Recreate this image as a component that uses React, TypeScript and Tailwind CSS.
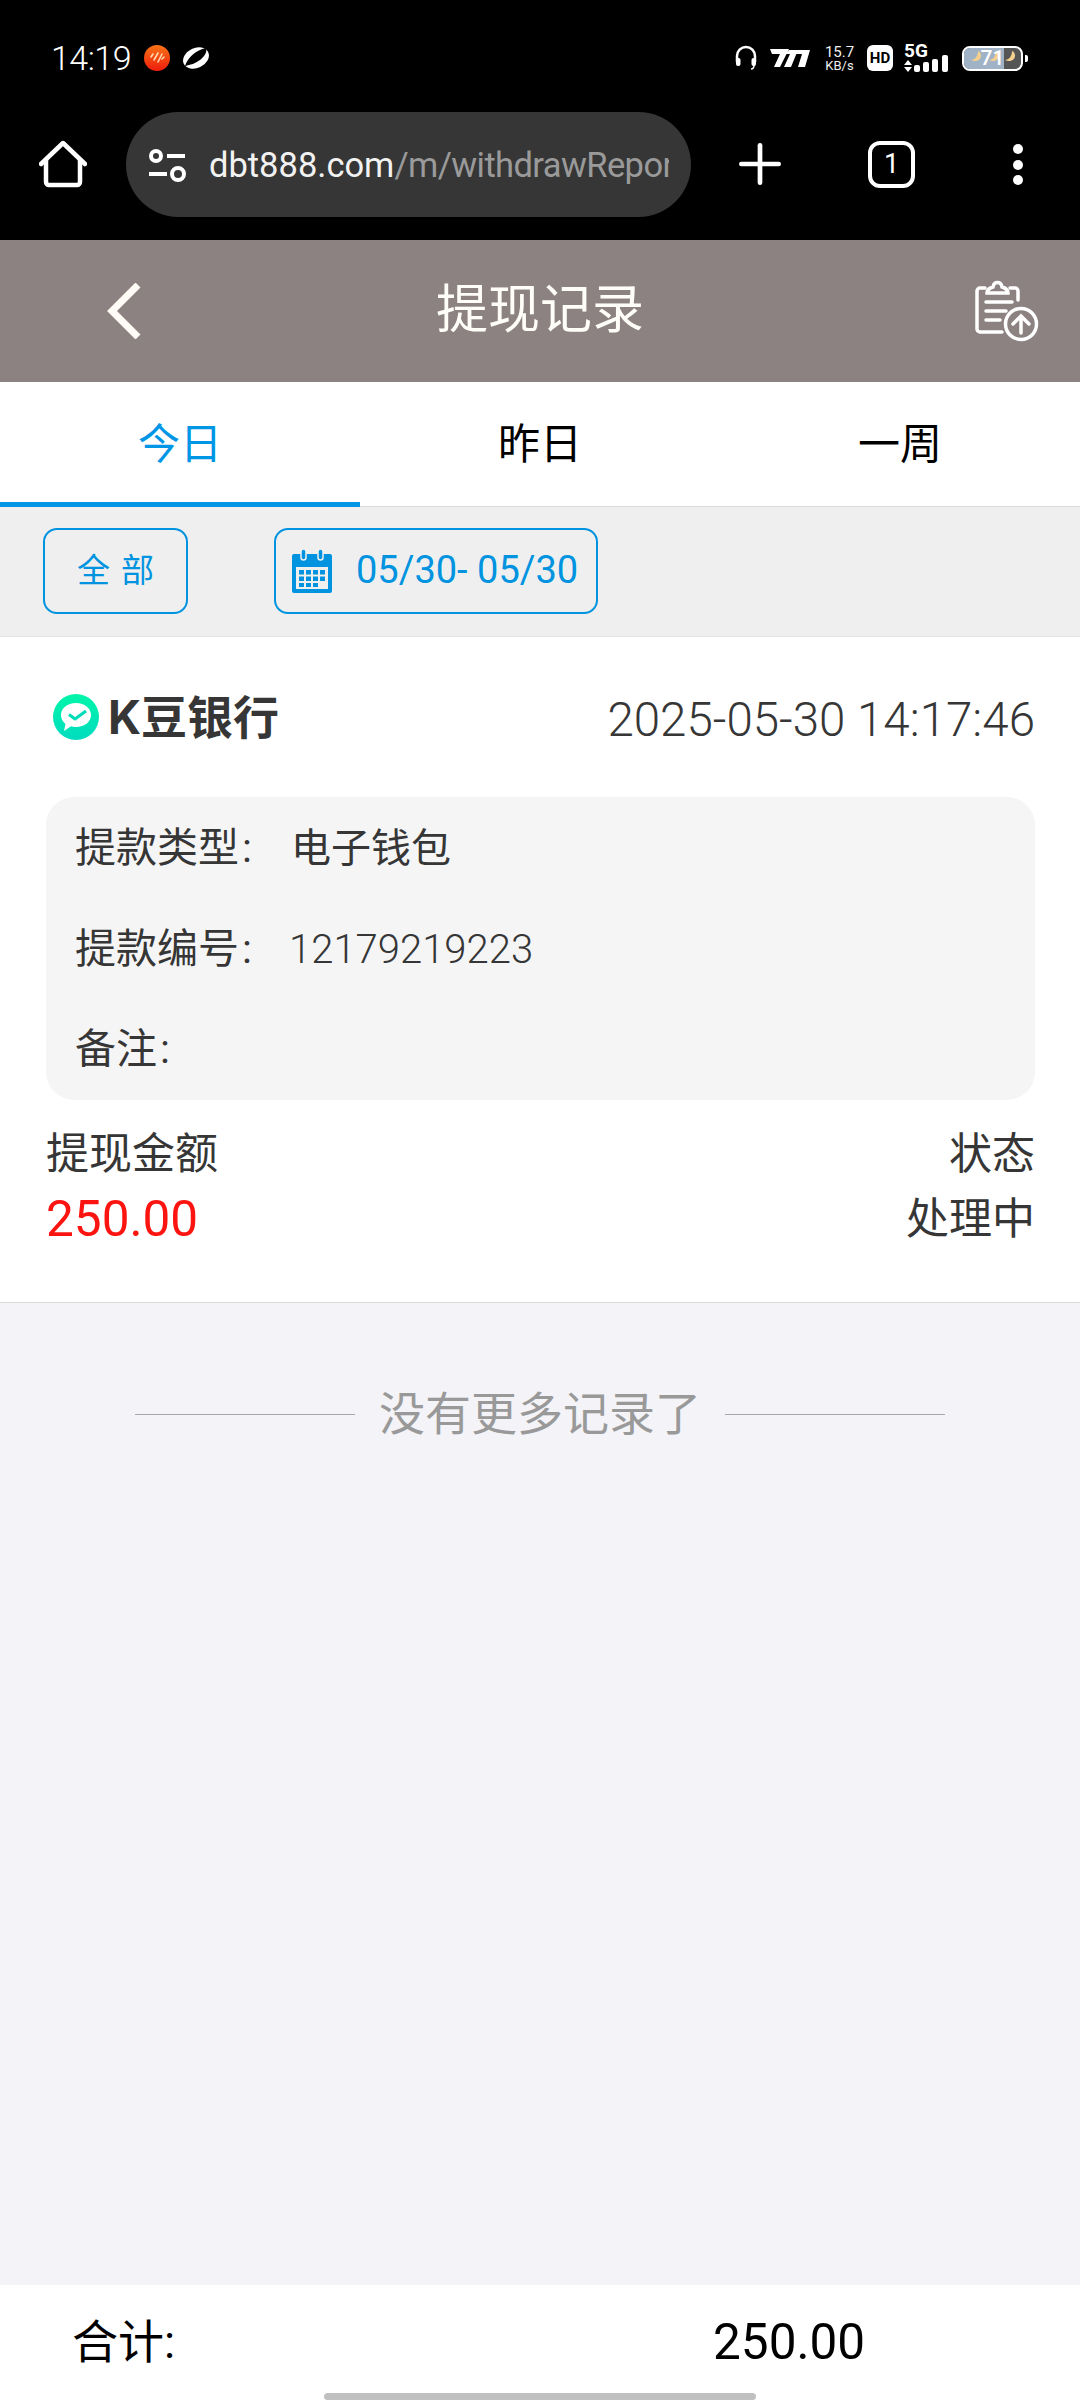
import { Plus } from "lucide-react";

const CJK = "font-['Roboto','Noto_Sans_CJK_SC',sans-serif]";

function Moon({ x }: { x: number }) {
  return <path d={`M${x} 3c3 1 4 5 2 8-2 2-6 3-9 1 4 0 7-4 7-9z`} fill="#f5cf8e" />;
}

function StatusBar() {
  return (
    <div className="h-[112px] flex items-start justify-between pl-[51px] pr-[52px] pt-[40px] text-white">
      <div className="flex items-center h-[36px]">
        <span className="text-[34px] leading-[36px] font-light tracking-[-0.5px]">14:19</span>
        <svg viewBox="0 0 26 26" className="w-[26px] h-[26px] ml-[13px]">
          <defs>
            <linearGradient id="rec" x1="0" y1="0" x2="0" y2="1">
              <stop offset="0" stopColor="#f97316" />
              <stop offset="1" stopColor="#ef1c0c" />
            </linearGradient>
          </defs>
          <circle cx="13" cy="13" r="13" fill="url(#rec)" />
          <path d="M7 12l2-3M10 15l4-7M14 17l4-8M18 14l2-2" stroke="#ffd9b0" strokeWidth="1.600" strokeLinecap="round" />
        </svg>
        <svg viewBox="0 0 26 24" className="w-[26px] h-[24px] ml-[13px]">
          <ellipse cx="13" cy="12" rx="13.500" ry="10" transform="rotate(-25 13 12)" fill="#fff" />
          <path d="M2 20C5 11 13 4 23 2c1 3 0 5-2 8-4 5-10 8-15 9-2 .5-3 1-4 1z" fill="#000" />
        </svg>
      </div>
      <div className="flex items-center h-[36px]">
        <svg viewBox="0 0 22 26" className="w-[22px] h-[26px]" fill="none" stroke="#fff" strokeWidth="2.500">
          <path d="M2 17v-6a9 9 0 0 1 18 0v6" />
          <rect x="1" y="13" width="4.500" height="8" rx="2" fill="#fff" stroke="none" />
          <rect x="16.500" y="13" width="4.500" height="8" rx="2" fill="#fff" stroke="none" />
          <path d="M19 20c0 3-1 4-3 4" strokeWidth="1.500" />
        </svg>
        <svg viewBox="0 0 40 18" className="w-[40px] h-[18px] ml-[13px]" fill="#fff">
          <path d="M0 0h19l-9 18H4l6-13H2zM19 1h9l-7 17h-7l6-13h-4zM28 1h12l-5 17h-7l4-13h-6z" />
        </svg>
        <div className="ml-[14px] w-[31px] flex flex-col items-center text-[#f0f0f0] font-['Roboto',sans-serif]">
          <span className="text-[15px] leading-[14px]">15.7</span>
          <span className="text-[13px] leading-[13px]">KB/s</span>
        </div>
        <div className="ml-[12px] w-[26px] h-[26px] rounded-[6px] bg-white flex items-center justify-center text-black text-[15px] leading-none font-bold font-['Roboto',sans-serif]">
          HD
        </div>
        <div className="ml-[11px] w-[44px] h-[30px] relative">
          <span className="absolute left-0 top-[-2px] text-[19px] leading-[20px] font-bold font-['Roboto',sans-serif]">5G</span>
          <svg viewBox="0 0 44 30" className="absolute inset-0 w-[44px] h-[30px]" fill="#fff">
            <path d="M4 17l4 5H0zM4 29l-4-5h8z" />
            <rect x="10" y="22" width="6" height="7" rx="2" />
            <rect x="19" y="19" width="6" height="10" rx="2" />
            <rect x="28" y="16" width="6" height="13" rx="2" />
            <rect x="38" y="12" width="6" height="17" rx="2" />
          </svg>
        </div>
        <div className="ml-[14px] flex items-center">
          <div className="relative w-[61px] h-[25px] rounded-[8px] border-2 border-white overflow-hidden bg-[#555] flex items-center justify-center">
            <div className="absolute left-0 top-0 bottom-0 w-[71%] bg-[#9fb2c6]" />
            <svg viewBox="0 0 57 21" className="absolute inset-0 w-[57px] h-[21px]">
              <Moon x={14} />
              <Moon x={32} />
              <Moon x={48} />
            </svg>
            <span className="relative text-[21px] leading-none text-white font-medium font-['Roboto',sans-serif]">71</span>
          </div>
          <div className="w-[3px] h-[7px] ml-[2px] rounded-r-[2px] bg-white" />
        </div>
      </div>
    </div>
  );
}

function BrowserBar() {
  return (
    <div className="h-[128px] flex items-start text-white">
      <svg viewBox="0 0 48 48" className="w-[48px] h-[48px] ml-[39px] mt-[28px]" fill="none" stroke="#fff" strokeWidth="4.500" strokeLinecap="round" strokeLinejoin="round">
        <path d="M2 24L24 3l22 21" />
        <path d="M7 20v22a3 3 0 0 0 3 3h28a3 3 0 0 0 3-3V20" />
      </svg>
      <div className="ml-[39px] w-[565px] h-[105px] shrink-0 rounded-full bg-[#363636] flex items-center pl-[22px] overflow-hidden">
        <svg viewBox="0 0 38 34" className="w-[38px] h-[34px] shrink-0" fill="none" stroke="#fff" strokeWidth="4">
          <circle cx="8" cy="8" r="5" />
          <path d="M19 8h18M1 26h18" />
          <circle cx="30" cy="26" r="6" />
        </svg>
        <div className="ml-[23px] w-[460px] overflow-hidden whitespace-nowrap text-[34.5px] leading-[42px] text-[#f2f2f2] font-['Roboto',sans-serif]">
          dbt888.com<span className="text-[#9a9a9a] tracking-[-0.6px]">/m/withdrawReport</span>
        </div>
      </div>
      <Plus className="ml-[37px] mt-[20px] w-[64px] h-[64px] shrink-0" strokeWidth={1.76} />
      <div className="ml-[76px] mt-[29px] w-[47px] h-[47px] shrink-0 rounded-[12px] border-[4px] border-white flex items-center justify-center text-[27px] leading-none font-['Roboto',sans-serif]">
        1
      </div>
      <div className="ml-[98px] mt-[32px] shrink-0 flex flex-col gap-[5.500px]">
        <div className="w-[10px] h-[10px] rounded-full bg-white" />
        <div className="w-[10px] h-[10px] rounded-full bg-white" />
        <div className="w-[10px] h-[10px] rounded-full bg-white" />
      </div>
    </div>
  );
}

function Header() {
  return (
    <div className="h-[142px] bg-[#8d8282] flex items-center justify-between relative text-[#fffdf8]">
      <svg viewBox="0 0 36 56" className="ml-[106px] w-[36px] h-[56px]" fill="none" stroke="#fffdf6" strokeWidth="7">
        <path d="M32 2L6 28l26 26" />
      </svg>
      <div className="absolute inset-x-0 text-center text-[52px] leading-[60px]">提现记录</div>
      <svg viewBox="0 0 66 62" className="w-[66px] h-[62px] mr-[39px]" fill="none" stroke="#fff" strokeWidth="3.500" strokeLinecap="round">
        <path d="M10 8H5a3 3 0 0 0-3 3v38a3 3 0 0 0 3 3h22M35 8h5a3 3 0 0 1 3 3v9" />
        <path d="M12 13h21c0-4-3-5-6-6-1-6-8-6-9 0-3 1-6 2-6 6z" />
        <path d="M11 22h26M11 31h20M11 40h14" />
        <circle cx="46" cy="44" r="15.500" />
        <path d="M46 53V36M38 44l8-8 8 8" />
      </svg>
    </div>
  );
}

function Tabs() {
  return (
    <div className="h-[125px] bg-white border-b border-[#dcdcdc] grid grid-cols-3 text-[42px]">
      <div className="relative flex items-center justify-center text-[#0096e6]">
        今日
        <div className="absolute left-0 right-0 bottom-[-1px] h-[5px] bg-[#0096e6]" />
      </div>
      <div className="flex items-center justify-center text-black">昨日</div>
      <div className="flex items-center justify-center text-black">一周</div>
    </div>
  );
}

function Filters() {
  return (
    <div className="h-[130px] bg-[#efefef] border-b border-[#e4e4e4] flex items-center pb-[2px] pl-[43px] text-[#0093e0]">
      <div className="w-[145px] h-[86px] rounded-[14px] border-2 border-[#0093e0] flex items-center justify-center text-[33px] tracking-[11px] pl-[11px]">
        全部
      </div>
      <div className="ml-[86px] w-[324px] h-[86px] rounded-[14px] border-2 border-[#0093e0] flex items-center pl-[16px] text-[38px]">
        <svg viewBox="0 0 40 44" className="w-[40px] h-[44px] shrink-0" fill="#0093e0">
          <path d="M2 5h36a2 2 0 0 1 2 2v35a2 2 0 0 1-2 2H2a2 2 0 0 1-2-2V7a2 2 0 0 1 2-2zm2 13v22h32V18z" />
          <rect x="9" y="0" width="5" height="11" rx="2.500" stroke="#efefef" strokeWidth="1.500" />
          <rect x="26" y="0" width="5" height="11" rx="2.500" stroke="#efefef" strokeWidth="1.500" />
          <rect x="7" y="21" width="5" height="4.500" />
          <rect x="14" y="21" width="5" height="4.500" />
          <rect x="21" y="21" width="5" height="4.500" />
          <rect x="28" y="21" width="5" height="4.500" />
          <rect x="7" y="27.500" width="5" height="4.500" />
          <rect x="14" y="27.500" width="5" height="4.500" />
          <rect x="21" y="27.500" width="5" height="4.500" />
          <rect x="28" y="27.500" width="5" height="4.500" />
          <rect x="7" y="34" width="5" height="4" />
          <rect x="14" y="34" width="5" height="4" />
          <rect x="21" y="34" width="5" height="4" />
        </svg>
        <span className="ml-[24px] whitespace-pre font-['Roboto',sans-serif]">05/30- 05/30</span>
      </div>
    </div>
  );
}

function RecordCard() {
  return (
    <div className="h-[666px] bg-white border-b border-[#d9d9d9] pl-[46px] pr-[45px] text-[#363636]">
      <div className="h-[160px] flex items-center justify-between">
        <div className="flex items-center ml-[7px]">
          <svg viewBox="0 0 46 46" className="w-[46px] h-[46px]">
            <defs>
              <linearGradient id="bank" x1="0" y1="0" x2="0" y2="1">
                <stop offset="0" stopColor="#00f5a8" />
                <stop offset="1" stopColor="#00dcc0" />
              </linearGradient>
            </defs>
            <circle cx="23" cy="23" r="23" fill="url(#bank)" />
            <path d="M23 9c8.500 0 15 5 15 12s-6.500 12-15 12c-2 0-3.500-.3-5-.8L11 37l1.500-7C9.500 27.500 8 24.500 8 21 8 14 14.500 9 23 9z" fill="#fff" />
            <path d="M16 20.500l6 4.500 11-8" fill="none" stroke="#00dcb8" strokeWidth="3" strokeLinejoin="round" />
          </svg>
          <span className="ml-[9px] text-[46px] leading-[54px] font-bold font-['Inter','Noto_Sans_CJK_SC',sans-serif]">K豆银行</span>
        </div>
        <span className="mt-[6px] text-[47.500px] leading-[52px] font-light font-['Roboto',sans-serif]">2025-05-30 14:17:46</span>
      </div>
      <div className="h-[303px] rounded-[28px] bg-[#f5f5f6] pl-[29px] pt-[1px] text-[41px]">
        <div className="h-[102px] flex items-center">
          <span className="w-[216px] shrink-0">提款类型<span className="ml-[3px]">:</span></span>
          <span className="text-[40px]">电子钱包</span>
        </div>
        <div className="h-[100px] flex items-center">
          <span className="w-[214px] shrink-0">提款编号<span className="ml-[3px]">:</span></span>
          <span className="text-[40px] font-light font-['Roboto',sans-serif]">12179219223</span>
        </div>
        <div className="h-[100px] flex items-center">
          <span>备注<span className="ml-[3px]">:</span></span>
        </div>
      </div>
      <div className="flex justify-between pt-[26px] text-[43px] leading-[56px]">
        <span>提现金额</span>
        <span>状态</span>
      </div>
      <div className="flex justify-between items-center text-[43px] leading-[74px]">
        <span className="text-[#fb1410] text-[49.500px] font-['Roboto',sans-serif]">250.00</span>
        <span>处理中</span>
      </div>
    </div>
  );
}

function NoMore() {
  return (
    <div className="flex-1 flex justify-center pt-[81px] text-[#999]">
      <div className="flex items-center h-[60px] gap-[24px] text-[46px]">
        <div className="w-[220px] h-[1px] bg-[#a8a8a8]" />
        <span>没有更多记录了</span>
        <div className="w-[220px] h-[1px] bg-[#a8a8a8]" />
      </div>
    </div>
  );
}

function Footer() {
  return (
    <div className="relative h-[115px] bg-white text-black">
      <div className="absolute left-[72px] top-[29px] leading-[56px] text-[46px]">合计:</div>
      <div className="absolute left-[713px] top-[29px] leading-[56px] font-['Roboto',sans-serif] text-[49.500px]">250.00</div>
      <div className="absolute left-[324px] bottom-0 w-[432px] h-[7px] rounded-full bg-[#c0c0c0]" />
    </div>
  );
}

export default function App() {
  return (
    <div className={`w-[1080px] h-[2400px] flex flex-col bg-[#f3f3f8] overflow-hidden ${CJK}`}>
      <div className="bg-black h-[240px] shrink-0">
        <StatusBar />
        <BrowserBar />
      </div>
      <Header />
      <Tabs />
      <Filters />
      <RecordCard />
      <NoMore />
      <Footer />
    </div>
  );
}
